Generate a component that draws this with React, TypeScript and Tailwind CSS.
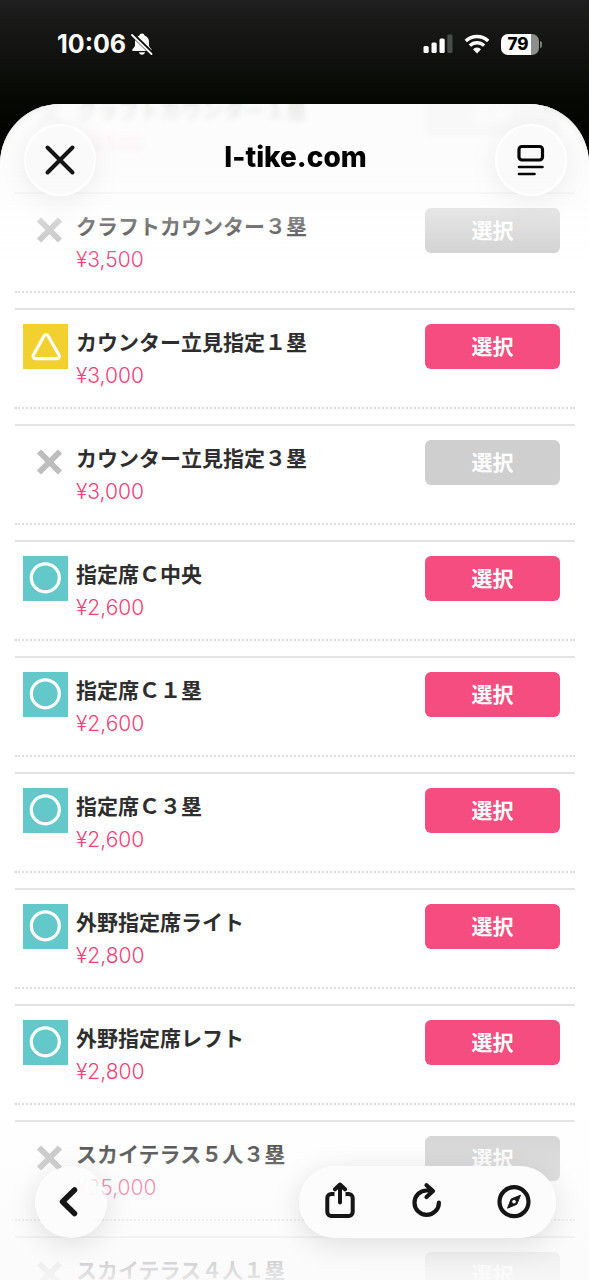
import React from 'react';

type Status = 'open' | 'few' | 'none';

interface Seat {
  name: string;
  price: string;
  status: Status;
}

const seats: Seat[] = [
  { name: 'クラフトカウンター１塁', price: '¥3,500', status: 'none' },
  { name: 'クラフトカウンター３塁', price: '¥3,500', status: 'none' },
  { name: 'カウンター立見指定１塁', price: '¥3,000', status: 'few' },
  { name: 'カウンター立見指定３塁', price: '¥3,000', status: 'none' },
  { name: '指定席Ｃ中央', price: '¥2,600', status: 'open' },
  { name: '指定席Ｃ１塁', price: '¥2,600', status: 'open' },
  { name: '指定席Ｃ３塁', price: '¥2,600', status: 'open' },
  { name: '外野指定席ライト', price: '¥2,800', status: 'open' },
  { name: '外野指定席レフト', price: '¥2,800', status: 'open' },
  { name: 'スカイテラス５人３塁', price: '¥25,000', status: 'none' },
  { name: 'スカイテラス４人１塁', price: '¥20,000', status: 'none' },
];

const StatusIcon: React.FC<{ status: Status }> = ({ status }) => {
  if (status === 'none') {
    return (
      <svg className="size-[45px] shrink-0" viewBox="0 0 45 45" fill="none" role="img" aria-label="売切">
        <path d="M16 11.5 37 32.5M37 11.5 16 32.5" stroke="#bdbdbd" strokeWidth="6" />
      </svg>
    );
  }
  if (status === 'few') {
    return (
      <svg className="size-[45px] shrink-0 bg-[#f2d02f]" viewBox="0 0 45 45" fill="none" role="img" aria-label="残りわずか">
        <path
          d="M21.2 11.7a2.2 2.2 0 0 1 3.8 0l11 19.3c.9 1.700 0 3.600-2 3.600H12.400c-2 0-2.900-1.900-2-3.600z"
          stroke="#fff"
          strokeWidth="3.2"
          strokeLinejoin="round"
        />
      </svg>
    );
  }
  return (
    <svg className="size-[45px] shrink-0 bg-[#62c8c9]" viewBox="0 0 45 45" fill="none" role="img" aria-label="空席あり">
      <circle cx="22.3" cy="21.8" r="14" stroke="#fff" strokeWidth="3.2" />
    </svg>
  );
};

const SeatRow: React.FC<{ seat: Seat }> = ({ seat }) => {
  const soldOut = seat.status === 'none';
  return (
    <li className="mb-[15px] flex items-start border-t-2 border-b-2 border-t-[#e2e4e4] border-b-[#dcdcdc] [border-bottom-style:dotted] pt-[14px] pr-[15px] pb-[15px] pl-2">
      <StatusIcon status={seat.status} />
      <div className="ml-2 min-w-0 flex-1 pt-0.5">
        <h2 className="text-[21px] leading-[33px] font-bold text-[#2e2e2e]">{seat.name}</h2>
        <p className="font-['Inter'] text-[21px] leading-[33px] font-light text-[#ee3f78]">{seat.price}</p>
      </div>
      <button
        type="button"
        disabled={soldOut}
        className={`h-[45px] w-[135px] shrink-0 rounded-md text-[21px] leading-7 font-bold text-white ${
          soldOut ? 'bg-[#cfcfcf]' : 'bg-[#f54d80]'
        }`}
      >
        選択
      </button>
    </li>
  );
};

const StatusBar: React.FC = () => (
  <div className="flex h-[104px] shrink-0 items-start justify-between pt-7 pr-[47px] pl-[57px] text-white">
    <div className="flex h-8 items-center gap-1">
      <span className="font-['Inter'] text-[25px] leading-8 font-bold">10:06</span>
      <svg width="24" height="24" viewBox="0 0 24 24" fill="#fff" aria-label="消音">
        <path d="M12 1.5c-1.4 0-2.3.9-2.5 2.1C6.6 4.6 5 7 5 10v3.5c0 1.6-2.8 3.3-2.8 4.6 0 .6.5 1 1.3 1h17c.8 0 1.3-.4 1.3-1 0-1.3-2.8-3-2.8-4.6V10c0-3-1.6-5.4-4.5-6.4-.2-1.2-1.1-2.1-2.500-2.100z" />
        <path d="M9 20.300h6c-.3 1.500-1.400 2.400-3 2.400s-2.700-.9-3-2.400z" />
        <path d="M2.500 2.500 22 21.500" stroke="#0f110d" strokeWidth="4.5" />
        <path d="M2 3 21.500 22" stroke="#fff" strokeWidth="1.8" strokeLinecap="round" />
      </svg>
    </div>
    <div className="flex h-8 items-center gap-[11px]">
      <svg width="30" height="20" viewBox="0 0 30 20" fill="#fff" aria-label="電波">
        <rect x="0.5" y="12" width="5.2" height="7" rx="1.5" />
        <rect x="8.5" y="8.5" width="5.2" height="10.5" rx="1.5" />
        <rect x="16.5" y="4.5" width="5.2" height="14.5" rx="1.5" />
        <rect x="24.3" y="0.5" width="5.2" height="18.5" rx="1.5" fill="#4a4c49" />
      </svg>
      <svg width="26" height="20" viewBox="0 0 26 20" fill="none" stroke="#fff" strokeWidth="3.4" aria-label="Wi-Fi">
        <path d="M1.800 7a16 16 0 0 1 22.400 0" />
        <path d="M5.900 11.600a10.200 10.200 0 0 1 14.200 0" />
        <path d="M13 19.400 9 15.300a5.600 5.600 0 0 1 8 0z" fill="#fff" stroke="none" />
      </svg>
      <div className="flex items-center gap-px">
        <div className="flex h-[21px] w-[38px] items-center justify-center rounded-[7px] bg-[linear-gradient(to_right,#fff_79%,#8d8f8c_79%)] pr-1 font-['Inter'] text-[17px] leading-5 font-extrabold text-black">
          79
        </div>
        <div className="h-[7px] w-0.5 rounded-r-full bg-[#7b7d7a]" />
      </div>
    </div>
  </div>
);

const Header: React.FC = () => (
  <header className="absolute inset-x-0 top-0 z-20 flex items-start justify-between pt-5 pr-[22px] pl-6">
    <button
      type="button"
      aria-label="閉じる"
      className="flex size-[72px] items-center justify-center rounded-full border-2 border-white bg-[#fafafa]/90 shadow-[0_6px_30px_rgba(0,0,0,0.07)]"
    >
      <svg width="32" height="32" viewBox="0 0 32 32" fill="none" stroke="#151515" strokeWidth="4" strokeLinecap="round">
        <path d="M3.500 3.500 28.500 28.500M28.500 3.500 3.500 28.500" />
      </svg>
    </button>
    <h1 className="pt-[15px] font-['Inter'] text-[28px] leading-9 font-extrabold text-black">l-tike.com</h1>
    <button
      type="button"
      aria-label="ページメニュー"
      className="flex size-[72px] items-center justify-center rounded-full border-2 border-white bg-[#fafafa]/90 shadow-[0_6px_30px_rgba(0,0,0,0.07)]"
    >
      <svg width="30" height="32" viewBox="0 0 30 32" fill="none" stroke="#050505" strokeWidth="2.6" strokeLinecap="round">
        <rect x="3" y="2.5" width="23.5" height="13.5" rx="3" strokeWidth="3.2" />
        <path d="M3 23h23.500M3 30h15.500" />
      </svg>
    </button>
  </header>
);

const Toolbar: React.FC = () => (
  <nav className="absolute inset-x-0 bottom-[42px] z-20 flex items-center justify-between pr-[33px] pl-[35px]">
    <button
      type="button"
      aria-label="戻る"
      className="flex size-[72px] items-center justify-center rounded-full bg-[radial-gradient(circle,#fcfcfcf5_29px,#fcfcfc99_33px)] shadow-[0_6px_30px_rgba(0,0,0,0.12)]"
    >
      <svg width="32" height="32" viewBox="0 0 32 32" fill="none" stroke="#151515" strokeWidth="5.5" strokeLinecap="round" strokeLinejoin="round">
        <path d="M19.500 4 7.500 15.700l12 11.800" />
      </svg>
    </button>
    <div className="flex h-[72px] w-[257px] items-center justify-between rounded-full bg-[#fcfcfc]/98 pr-[18px] pl-[17px] shadow-[0_6px_30px_rgba(0,0,0,0.12)]">
      <button type="button" aria-label="共有" className="flex size-12 items-center justify-center">
        <svg width="36" height="40" viewBox="0 0 36 40" fill="none" stroke="#151515" strokeWidth="4" strokeLinecap="round" strokeLinejoin="round">
          <path d="M12.500 12H9.300a4 4 0 0 0-4 4v14a4 4 0 0 0 4 4h17.400a4 4 0 0 0 4-4V16a4 4 0 0 0-4-4h-3.200" strokeLinecap="butt" />
          <path d="M18 20.500V3.500M13 7.300 18 2.500l5 4.800" />
        </svg>
      </button>
      <button type="button" aria-label="再読み込み" className="flex size-12 items-center justify-center">
        <svg width="36" height="40" viewBox="0 0 36 40" fill="none" stroke="#151515" strokeWidth="4.200" strokeLinecap="round" strokeLinejoin="round">
          <path d="M29.900 20.700a12.200 12.200 0 1 1-12.200-12.200h5.500M17.500 3.200 24 9l-6.500 6" />
        </svg>
      </button>
      <button type="button" aria-label="ブラウザで開く" className="flex size-12 items-center justify-center">
        <svg width="36" height="40" viewBox="0 0 36 40" fill="none" aria-hidden="true">
          <circle cx="18" cy="19.7" r="14.5" stroke="#151515" strokeWidth="4.2" />
          <path
            fillRule="evenodd"
            d="M24.500 13.200 20.800 22.300l-9.300 3.900L15.200 17zM18 17.400a2.300 2.300 0 1 0 0 4.600 2.300 2.300 0 0 0 0-4.600z"
            fill="#151515"
            stroke="#151515"
            strokeLinejoin="round"
          />
        </svg>
      </button>
    </div>
  </nav>
);

export default function App() {
  return (
    <div className="flex h-screen flex-col overflow-hidden bg-[linear-gradient(to_bottom,#1e1f1e_0,#050702_104px,#000_200px)] font-['Liberation_Sans','Noto_Sans_CJK_JP',sans-serif]">
      <StatusBar />
      <main className="relative min-h-0 flex-1 overflow-hidden rounded-t-[60px] bg-white">
        <Header />
        <ul className="-mt-7 pr-[14px] pl-[15px]">
          {seats.map((seat) => (
            <SeatRow key={seat.name} seat={seat} />
          ))}
        </ul>
        {/* Edge fades under the floating controls */}
        <div className="pointer-events-none absolute inset-x-0 top-0 z-10 h-24 backdrop-blur-[3px] [mask-image:linear-gradient(#000_70%,transparent)]" />
        <div className="pointer-events-none absolute inset-x-0 top-0 z-10 h-40 bg-[linear-gradient(#fcfcfce6_0,#fcfcfce6_40%,#fcfcfc00)]" />
        <div className="pointer-events-none absolute inset-x-0 bottom-0 z-10 h-44 bg-[linear-gradient(#fbfbfb00,#fafafae6)]" />
        <Toolbar />
      </main>
    </div>
  );
}
